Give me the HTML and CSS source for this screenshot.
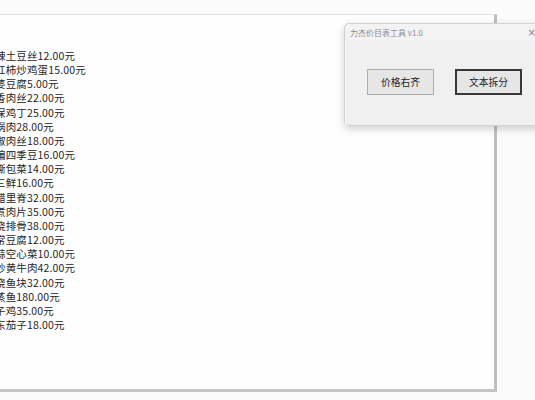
FILE: index.html
```html
<!DOCTYPE html>
<html lang="zh-CN">
<head>
<meta charset="utf-8">
<title>力杰价目表工具 v1.0</title>
<link rel="stylesheet" href="styles.css">
</head>
<body>
<div class="doc">
  <div class="list">
    <div>辣土豆丝12.00元</div>
    <div>红柿炒鸡蛋15.00元</div>
    <div>婆豆腐5.00元</div>
    <div>香肉丝22.00元</div>
    <div>保鸡丁25.00元</div>
    <div>锅肉28.00元</div>
    <div>椒肉丝18.00元</div>
    <div>煸四季豆16.00元</div>
    <div>撕包菜14.00元</div>
    <div>三鲜16.00元</div>
    <div>醋里脊32.00元</div>
    <div>煮肉片35.00元</div>
    <div>烧排骨38.00元</div>
    <div>常豆腐12.00元</div>
    <div>蒜空心菜10.00元</div>
    <div>炒黄牛肉42.00元</div>
    <div>烧鱼块32.00元</div>
    <div>蒸鱼180.00元</div>
    <div>子鸡35.00元</div>
    <div>东茄子18.00元</div>
  </div>
</div>
<div class="dialog">
  <div class="titlebar">
    <span class="title">力杰价目表工具 v1.0</span>
    <span class="close">×</span>
  </div>
  <div class="client">
    <button class="btn">价格右齐</button>
    <button class="btn default">文本拆分</button>
  </div>
</div>
</body>
</html>
```
FILE: styles.css
```css
html, body {
  margin: 0;
  padding: 0;
}
body {
  width: 535px;
  height: 400px;
  overflow: hidden;
  background: #fbfbfb;
  position: relative;
  font-family: "Noto Sans CJK SC", "Noto Sans", sans-serif;
}
.doc {
  margin-top: 14px;
  width: 494px;
  height: 374px;
  background: #fefefe;
  border-top: 1px solid #e2e2e2;
  border-right: 3px solid #bfbfbf;
  border-bottom: 3px solid #c6c6c6;
  overflow: hidden;
}
.list {
  padding-top: 34px;
  margin-left: -5px;
  font-size: 10.5px;
  letter-spacing: 0.15px;
  line-height: 14.15px;
  color: #262626;
  white-space: nowrap;
}
.dialog {
  position: absolute;
  left: 344px;
  top: 23px;
  width: 200px;
  height: 101px;
  background: #f0f0f0;
  border: 1px solid #d2d2d2;
  border-radius: 5px;
  box-shadow: 0 3px 9px rgba(0, 0, 0, 0.18);
  display: flex;
  flex-direction: column;
}
.titlebar {
  height: 17px;
  display: flex;
  align-items: center;
  justify-content: space-between;
  padding: 0 9px 0 5px;
  background: #f3f3f3;
  border-radius: 5px 5px 0 0;
}
.title {
  font-size: 8px;
  color: #8c8c8c;
}
.close {
  font-family: "DejaVu Sans", sans-serif;
  font-size: 10px;
  color: #888;
}
.client {
  flex: 1;
  display: flex;
  align-items: flex-start;
  gap: 21px;
  padding: 28px 0 0 21px;
  border-left: 1px solid #f8f8f8;
}
.btn {
  width: 67px;
  height: 26px;
  margin: 0;
  padding: 0;
  font-family: "Noto Sans CJK SC", sans-serif;
  font-size: 9.8px;
  color: #1e1e1e;
  background: #e6e6e6;
  border: 1px solid #adadad;
  border-radius: 0;
}
.btn.default {
  border: 2px solid #383838;
}
```
